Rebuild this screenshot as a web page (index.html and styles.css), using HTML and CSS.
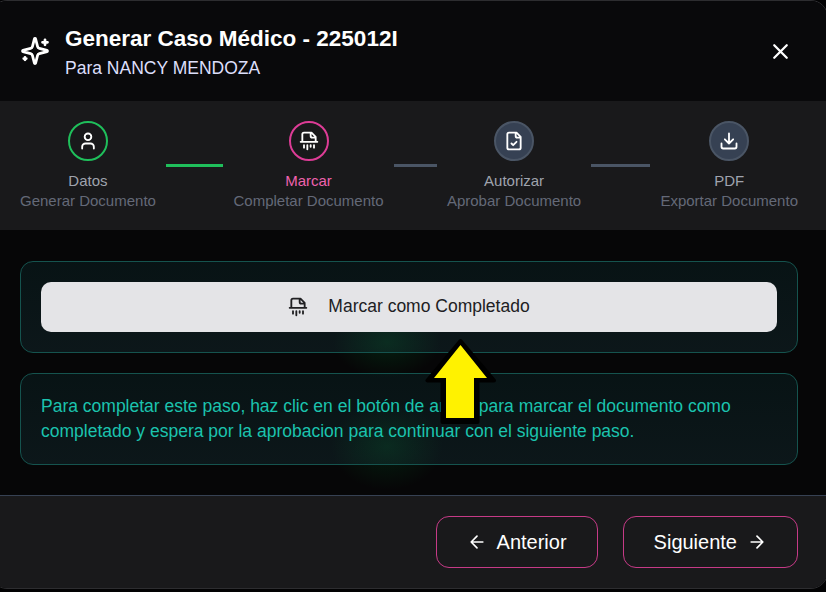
FILE: index.html
```html
<!DOCTYPE html>
<html lang="es">
<head>
<meta charset="utf-8">
<title>Generar Caso Médico</title>
<link rel="stylesheet" href="styles.css">
</head>
<body>
<svg class="defs" aria-hidden="true">
  <symbol id="shredder" viewBox="0 0 24 24"><path d="M10 22v-5M14 19v-2M14 2v4a2 2 0 0 0 2 2h4M18 20v-3M2 13h20M20 13V7l-5-5H6a2 2 0 0 0-2 2v9M6 20v-3"/></symbol>
</svg>
<section class="modal">
  <header class="header">
    <svg class="icon icon-lg" viewBox="0 0 24 24"><path d="M9.937 15.5A2 2 0 0 0 8.5 14.063l-6.135-1.582a.5.5 0 0 1 0-.962L8.5 9.936A2 2 0 0 0 9.937 8.5l1.582-6.135a.5.5 0 0 1 .963 0L14.063 8.5A2 2 0 0 0 15.5 9.937l6.135 1.581a.5.5 0 0 1 0 .964L15.5 14.063a2 2 0 0 0-1.437 1.437l-1.582 6.135a.5.5 0 0 1-.963 0zM20 3v4M22 5h-4M4 17v2M5 18H3"/></svg>
    <div class="heading">
      <h1>Generar Caso Médico - 225012I</h1>
      <p>Para NANCY MENDOZA</p>
    </div>
    <button class="close" aria-label="Cerrar"><svg class="icon icon-md" viewBox="0 0 24 24"><path d="M18 6 6 18M6 6l12 12"/></svg></button>
  </header>
  <ol class="steps">
    <li class="done">
      <div class="step">
        <span class="dot"><svg class="icon" viewBox="0 0 24 24"><path d="M19 21v-2a4 4 0 0 0-4-4H9a4 4 0 0 0-4 4v2"/><circle cx="12" cy="7" r="4"/></svg></span>
        <span class="name">Datos</span><span class="desc">Generar Documento</span>
      </div>
      <span class="line"></span>
    </li>
    <li class="current">
      <div class="step">
        <span class="dot"><svg class="icon"><use href="#shredder"/></svg></span>
        <span class="name">Marcar</span><span class="desc">Completar Documento</span>
      </div>
      <span class="line"></span>
    </li>
    <li>
      <div class="step">
        <span class="dot"><svg class="icon" viewBox="0 0 24 24"><path d="M15 2H6a2 2 0 0 0-2 2v16a2 2 0 0 0 2 2h12a2 2 0 0 0 2-2V7ZM14 2v4a2 2 0 0 0 2 2h4M9 15l2 2 4-4"/></svg></span>
        <span class="name">Autorizar</span><span class="desc">Aprobar Documento</span>
      </div>
      <span class="line"></span>
    </li>
    <li>
      <div class="step">
        <span class="dot"><svg class="icon" viewBox="0 0 24 24"><path d="M21 15v4a2 2 0 0 1-2 2H5a2 2 0 0 1-2-2v-4M7 10l5 5 5-5M12 15V3"/></svg></span>
        <span class="name">PDF</span><span class="desc">Exportar Documento</span>
      </div>
    </li>
  </ol>
  <main class="content">
    <div class="card">
      <button class="mark"><svg class="icon"><use href="#shredder"/></svg><span>Marcar como Completado</span></button>
    </div>
    <div class="card">
      <p>Para completar este paso, haz clic en el botón de arriba para marcar el documento como completado y espera por la aprobacion para continuar con el siguiente paso.</p>
    </div>
    <svg class="pointer" viewBox="0 0 72 86"><path class="edge" d="M35.500 3 2.500 42.500H17.500V84H52.500V42.500H69Z"/><path class="fill" d="M35.500 7 9 40H21V80H49V40H62Z"/></svg>
  </main>
  <footer class="footer">
    <button class="nav"><svg class="icon" viewBox="0 0 24 24"><path d="m12 19-7-7 7-7M19 12H5"/></svg>Anterior</button>
    <button class="nav">Siguiente<svg class="icon" viewBox="0 0 24 24"><path d="M5 12h14M12 5l7 7-7 7"/></svg></button>
  </footer>
</section>
</body>
</html>
```
FILE: styles.css
```css
* { box-sizing: border-box; margin: 0; padding: 0; }
body {
  height: 592px;
  overflow: hidden;
  background: #020203;
  color: #fff;
  font-family: "Liberation Sans", Arial, sans-serif;
  font-size: 17.5px;
  line-height: 25px;
}
button { font: inherit; color: inherit; background: none; border: 0; }
.defs { display: none; }
.icon {
  width: 20px;
  height: 20px;
  flex: none;
  fill: none;
  stroke: currentColor;
  stroke-width: 2.2;
  stroke-linecap: round;
  stroke-linejoin: round;
}
.icon-md { width: 25px; height: 25px; }
.icon-lg { width: 30px; height: 30px; }
.modal {
  width: 838px;
  height: 589px;
  margin-left: -10px;
  display: flex;
  flex-direction: column;
  border: 1px solid #2d2d30;
  border-radius: 17px;
  background: #060607;
  overflow: hidden;
}
.header {
  height: 100px;
  flex: none;
  display: flex;
  align-items: center;
  gap: 15px;
  padding: 0 34px 0 29px;
  background: #09090b;
}
.heading { flex: 1; }
h1 { font-size: 22.5px; line-height: 35px; font-weight: 700; }
.heading p { color: #dcdffb; }
.close { display: flex; }
.steps {
  height: 129px;
  flex: none;
  display: flex;
  padding: 20px 29px 0;
  list-style: none;
  background: #19191b;
  font-size: 15px;
  line-height: 20px;
}
.steps li { display: flex; align-items: center; height: 90px; flex: 1; }
.steps li:last-child { flex: none; }
.step { display: flex; flex-direction: column; align-items: center; white-space: nowrap; }
.dot {
  width: 40px;
  height: 40px;
  margin-bottom: 10px;
  display: grid;
  place-items: center;
  border: 2px solid #4a5565;
  border-radius: 50%;
  background: #364153;
}
.name { color: #9fa3ad; }
.desc { color: #646978; }
.line { flex: 1; height: 3px; margin: 0 10px 2px; background: #4a5565; }
.done .dot { border-color: #1fbf5b; background: none; }
.done .line { background: #1fbf5b; }
.current .dot { border-color: #dd3c96; background: none; }
.current .name { color: #ee62ae; }
.content {
  position: relative;
  height: 265px;
  flex: none;
  display: flex;
  flex-direction: column;
  gap: 20px;
  padding: 31px 29px 0;
  background:
    radial-gradient(ellipse 54px 36px at 396px 112px, rgba(0, 105, 40, .26), transparent),
    radial-gradient(ellipse 56px 44px at 396px 216px, rgba(0, 105, 40, .24), transparent),
    #060607;
}
.card {
  height: 92px;
  padding: 20px;
  border: 1px solid #15534e;
  border-radius: 13px;
  background: linear-gradient(rgba(20, 115, 120, .12), rgba(50, 125, 140, .14));
  color: #1bc3ae;
}
.mark {
  width: 100%;
  height: 50px;
  display: flex;
  align-items: center;
  justify-content: center;
  gap: 20px;
  border-radius: 10px;
  background: #e4e4e7;
  color: #202023;
}
.mark span { padding-bottom: 2px; }
.pointer {
  position: absolute;
  left: 434px;
  top: 108px;
  width: 72px;
  height: 86px;
}
.pointer .edge { fill: #000; stroke: #000; stroke-width: 4; stroke-linejoin: round; }
.pointer .fill { fill: #fff200; }
.footer {
  flex: 1;
  display: flex;
  justify-content: flex-end;
  align-items: flex-start;
  gap: 25px;
  padding: 20px 29px 0;
  border-top: 1px solid #364153;
  background: #19191b;
}
.nav {
  height: 52px;
  display: flex;
  align-items: center;
  gap: 10px;
  padding: 0 30px;
  border: 1px solid #c63a87;
  border-radius: 13px;
  font-size: 20px;
}
.nav .icon { stroke-width: 2; }
```
